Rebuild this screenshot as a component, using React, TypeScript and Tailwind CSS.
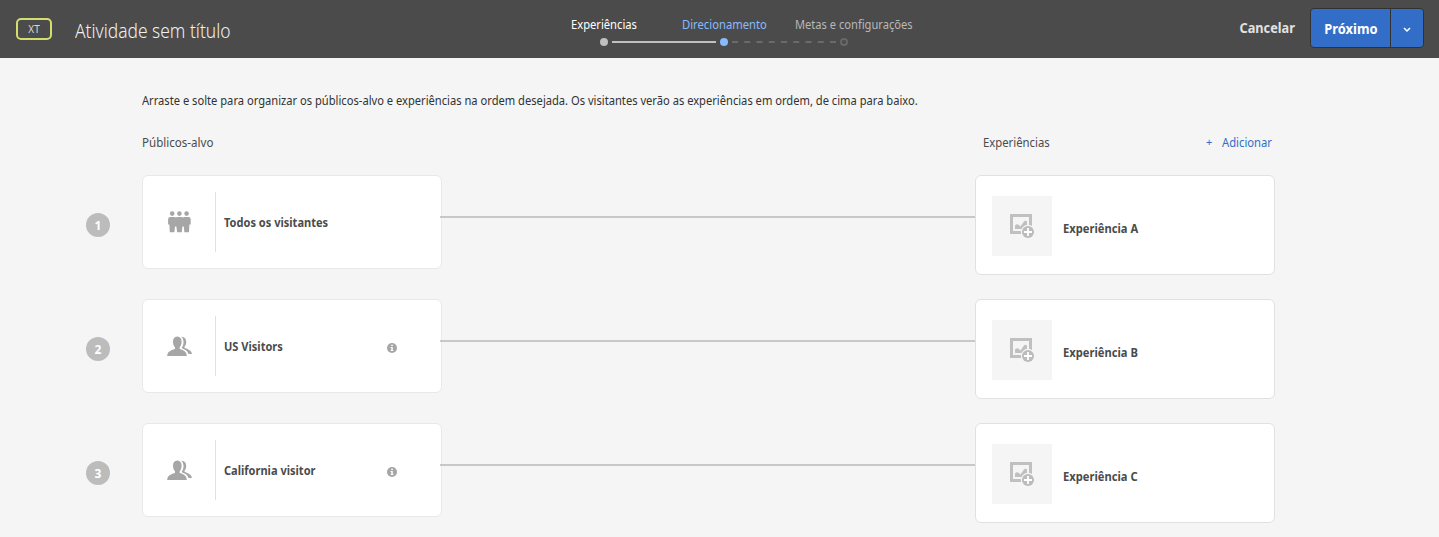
import React from "react";

const rows = [
  { n: 1, audience: "Todos os visitantes", everyone: true, experience: "Experiência A" },
  { n: 2, audience: "US Visitors", everyone: false, experience: "Experiência B" },
  { n: 3, audience: "California visitor", everyone: false, experience: "Experiência C" },
];

function EveryoneIcon() {
  return (
    <svg width="24" height="22" viewBox="0 0 24 22" fill="#a6a6a6">
      <circle cx="5.2" cy="2.6" r="2.3" />
      <circle cx="12.4" cy="2.6" r="2.3" />
      <circle cx="19.6" cy="2.6" r="2.3" />
      <path d="M3.4 6H7.4Q8.4 6 8.9 6.6Q9.4 6 10.4 6H14.4Q15.4 6 15.9 6.6Q16.4 6 17.4 6H21.4Q23.7 6 23.7 8.3V13.5H22.4L22 21.3H17.4L16.8 15.5H15.4L14.8 21.3H10.1L9.4 15.5H8L7.4 21.3H2.8L2.4 13.5H1.1V8.3Q1.1 6 3.4 6Z" />
    </svg>
  );
}

function UsersIcon() {
  return (
    <svg width="26" height="21" viewBox="0 0 26 21" fill="#a6a6a6">
      <path d="M11.3.6C14.2.6 15.6 2.8 15.6 5.8C15.6 8.2 14.8 10 13.7 11.2V13C16.3 14 20.8 14.8 20.8 20H1.2C1.2 14.8 6.4 14 9 13V11.2C7.8 10 7 8.2 7 5.8C7 2.8 8.4.6 11.3.6Z" />
      <path d="M15.3.8C18.5.5 20.2 2.7 20.2 5.8C20.2 8.3 19.5 9.6 18.6 10.6V11.9C21.2 12.8 25.7 14 25.9 18H22.5C21.5 14.8 18.9 13.4 15.8 12.3V11.6C16.8 10.2 17.5 8.3 17.5 6C17.5 3.8 16.7 2 15.3.8Z" />
    </svg>
  );
}

function ImageAddIcon() {
  return (
    <svg width="24" height="24" viewBox="0 0 24 24">
      <path d="M1.5 18.5V1.5H20.5V12M1.5 18.5H11" fill="none" stroke="#c0c0c0" strokeWidth="3" strokeLinecap="square" />
      <path d="M5 15V11.5Q7 9.5 9 11L10.5 12.5L14 7.5Q15.3 5.8 17 7.5V11L12 15Z" fill="#c0c0c0" />
      <circle cx="18" cy="18" r="7.2" fill="#f5f5f5" />
      <circle cx="18" cy="18" r="6" fill="#bcbcbc" />
      <path d="M18 14V22M14 18H22" stroke="#fff" strokeWidth="1.8" />
    </svg>
  );
}

function InfoIcon() {
  return (
    <svg width="10" height="10" viewBox="0 0 10 10">
      <circle cx="5" cy="5" r="5" fill="#a6a6a6" />
      <path d="M4.2 1.8H5.9V3.1H4.2ZM3.6 4H5.8V7.2H6.5V8.1H3.6V7.2H4.3V4.9H3.6Z" fill="#fff" />
    </svg>
  );
}

function Steps() {
  return (
    <div className="flex w-[342px] flex-col pt-[15px] text-[13px] leading-[18px]">
      <div className="flex whitespace-nowrap">
        <span className="w-[110.5px] shrink-0 origin-left scale-x-[0.86] text-white">Experiências</span>
        <span className="w-[113.5px] shrink-0 origin-left scale-x-[0.865] text-[#87bbff]">Direcionamento</span>
        <span className="w-[118px] shrink-0 origin-left scale-x-[0.855] text-[#b8b8b8]">Metas e configurações</span>
      </div>
      <svg className="mt-1 ml-7" width="250" height="10" viewBox="0 0 250 10">
        <circle cx="5" cy="5" r="4" fill="#c0c0c0" />
        <path d="M13 5H117" stroke="#c0c0c0" strokeWidth="2" />
        <circle cx="125" cy="5" r="4" fill="#87bbff" />
        <path d="M133 5H238" stroke="#6a6a6a" strokeWidth="2" strokeDasharray="6 6.25" />
        <circle cx="245" cy="5" r="3" fill="none" stroke="#686868" strokeWidth="2" />
      </svg>
    </div>
  );
}

export default function App() {
  return (
    <div className="h-[537px] w-[1439px] overflow-hidden bg-[#f5f5f5] font-['Noto_Sans','Open_Sans',sans-serif] text-[#4b4b4b]">
      <header className="flex h-[58px] bg-[#4b4b4b]">
        <div className="flex w-[571px] pl-4">
          <span className="mt-[18px] flex h-[22px] w-9 items-center justify-center rounded-[5px] border-2 border-[#d3de6e] text-[10px] text-[#d8d8d8]">XT</span>
          <h1 className="mt-[17px] ml-[23px] origin-left scale-x-[0.87] text-[20px] leading-7 font-light whitespace-nowrap text-[#f0f0f0]">Atividade sem título</h1>
        </div>
        <Steps />
        <div className="ml-auto flex pr-[15px]">
          <button className="mt-[18px] mr-[15px] h-5 origin-right scale-x-[0.91] text-[14px] leading-5 font-bold text-[#e1e1e1]">Cancelar</button>
          <div className="mt-2 flex h-10 w-[114px] rounded-[4px] border border-[#323232] bg-[#326ec8]">
            <button className="w-20 border-r border-[#323232] text-[14px] font-bold text-white"><span className="inline-block scale-x-[0.92]">Próximo</span></button>
            <button className="flex flex-1 items-center justify-center pt-[3px]" aria-label="Mais">
              <svg width="8" height="6" viewBox="0 0 8 6" fill="none" stroke="#fff" strokeWidth="1.5"><path d="M1 1L4 4L7 1" /></svg>
            </button>
          </div>
        </div>
      </header>

      <main className="pl-[86px] text-[13px]">
        <p className="ml-14 pt-[33px] leading-[18px] whitespace-nowrap text-[#323232]">
          <span className="inline-block origin-left scale-x-[0.8575]">Arraste e solte para organizar os públicos-alvo e experiências na ordem desejada. Os visitantes verão as experiências em ordem, de cima para baixo.</span>
        </p>
        <div className="mt-6 ml-14 flex leading-[18px]">
          <span className="w-[841px]"><span className="inline-block origin-left scale-x-[0.89]">Públicos-alvo</span></span>
          <span className="w-[223px]"><span className="inline-block origin-left scale-x-[0.87]">Experiências</span></span>
          <button className="flex text-left text-[#326ec8]"><span className="w-[15.5px] text-[11px]">+</span><span className="origin-left scale-x-[0.865]">Adicionar</span></button>
        </div>

        <div className="mt-6 flex flex-col gap-6">
          {rows.map((r) => (
            <section key={r.n} className="flex h-[100px]">
              <span className="mt-[38px] mr-8 flex size-6 items-center justify-center rounded-full bg-[#bcbcbc] pt-px text-[12px] font-bold text-white">{r.n}</span>
              <div className="flex h-[94px] w-[300px] items-center rounded-[6px] border border-[#e8e8e8] bg-white">
                <div className="flex h-[60px] w-[73px] items-center justify-center border-r border-[#e1e1e1]">
                  {r.everyone ? <EveryoneIcon /> : <UsersIcon />}
                </div>
                <span className="mt-0.5 ml-2 w-[162.5px] origin-left scale-x-[0.85] text-[13px] font-bold whitespace-nowrap">{r.audience}</span>
                {!r.everyone && <span className="mt-1"><InfoIcon /></span>}
              </div>
              <div className="relative mt-[41px] -ml-0.5 h-0.5 w-[535px] bg-[#c8c8c8]" />
              <div className="flex w-[300px] items-center rounded-[6px] border border-[#e1e1e1] bg-white pl-4">
                <div className="mt-0.5 flex size-[60px] items-center justify-center bg-[#f5f5f5]"><ImageAddIcon /></div>
                <span className="mt-2 ml-[11px] origin-left scale-x-[0.86] text-[13px] font-bold">{r.experience}</span>
              </div>
            </section>
          ))}
        </div>
      </main>
    </div>
  );
}
